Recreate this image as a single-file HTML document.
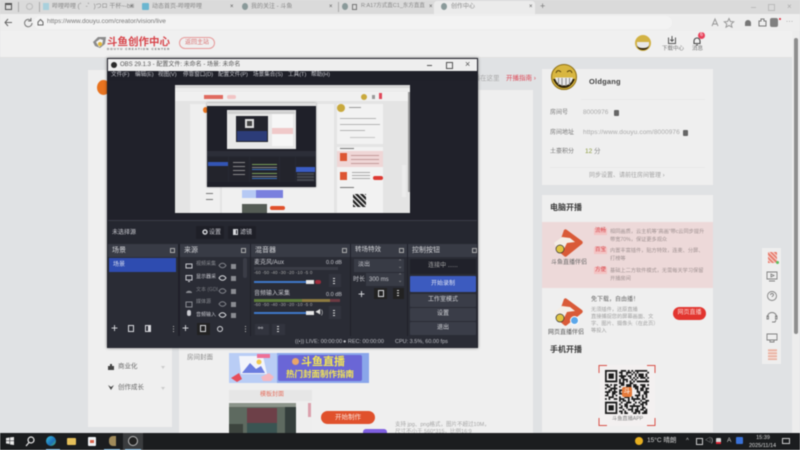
<!DOCTYPE html>
<html lang="zh"><head><meta charset="utf-8"><title>OBS</title>
<style>
html,body{margin:0;padding:0;width:800px;height:450px;overflow:hidden;background:#e0e2e4}
body{position:relative;font-family:"Liberation Sans","Noto Sans CJK SC",sans-serif;font-size:6px;color:#555}
#w{position:absolute;left:0;top:0;width:800px;height:450px;overflow:hidden;filter:blur(.55px)}
#w div,#w svg{position:absolute}
.t{white-space:nowrap;line-height:1}
.d{color:#c9cad0}
.btn{background:#3a3d48;border-radius:1px;color:#d5d6da;text-align:center;font-size:6px;line-height:13px}
.dock{background:#2a2c35}
.hd{left:0;right:0;top:0;height:13px;background:#383b45}
.hd b{position:absolute;left:4px;top:3px;font-weight:400;font-size:7px;color:#d4d5d9;line-height:1;white-space:nowrap}
.ft{color:#e0e1e5;font-size:12px;line-height:1}
.src{font-size:5px}
.card{background:#efefef}
</style></head><body><div id="w">

<!-- browser chrome -->
<div style="left:0;top:0;width:800px;height:14px;background:#dadada"></div>
<div style="left:434px;top:1px;width:101px;height:14px;background:#ebebeb;border-radius:3px 3px 0 0"></div>
<div style="left:5px;top:3px;width:7px;height:7px;border:1px solid #555;border-top-width:2px;box-sizing:border-box"></div>
<div style="left:18px;top:2px;width:1px;height:10px;background:#aaa"></div>
<div style="left:26px;top:3px;width:7px;height:7px;border:1px solid #bbb;border-radius:50%;box-sizing:border-box"></div>
<div style="left:39px;top:2px;width:1px;height:10px;background:#aaa"></div>
<div style="left:43px;top:3px;width:6px;height:7px;background:#a9d0dc"></div>
<div class="t" style="left:52px;top:4px;color:#888;font-size:6px">哔哩哔哩 (゜-゜)つロ 干杯~-bili</div>
<div class="t" style="left:130px;top:4px;color:#555;font-size:6px">×</div>
<div style="left:142px;top:3px;width:7px;height:7px;background:#6bb6d0;border-radius:1px"></div>
<div class="t" style="left:152px;top:4px;color:#888;font-size:6px">动态首页-哔哩哔哩</div>
<div class="t" style="left:230px;top:4px;color:#555;font-size:6px">×</div>
<div style="left:242px;top:3px;width:6px;height:7px;background:#8a9a9a;border-radius:50%"></div>
<div class="t" style="left:251px;top:4px;color:#888;font-size:6px">我的关注 - 斗鱼</div>
<div class="t" style="left:329px;top:4px;color:#555;font-size:6px">×</div>
<div style="left:338px;top:2px;width:1px;height:10px;background:#aaa"></div>
<div style="left:342px;top:3px;width:6px;height:7px;background:#8a9a9a;border-radius:50%"></div>
<div style="left:352px;top:4px;width:5px;height:6px;border:1px solid #777;box-sizing:border-box"></div>
<div class="t" style="left:361px;top:4px;color:#888;font-size:5.5px">R:A17方式直C1_东方直直</div>
<div class="t" style="left:429px;top:4px;color:#555;font-size:6px">×</div>
<div style="left:441px;top:3px;width:6px;height:7px;background:#8a9a9a;border-radius:50%"></div>
<div class="t" style="left:451px;top:4px;color:#888;font-size:6px">创作中心</div>
<div class="t" style="left:529px;top:4px;color:#555;font-size:6px">×</div>
<div class="t" style="left:540px;top:2px;color:#777;font-size:9px">+</div>
<div style="left:751px;top:7px;width:5px;height:1px;background:#bbb"></div>
<div style="left:768px;top:4px;width:5px;height:5px;border:1px solid #bbb"></div>
<div class="t" style="left:787px;top:3px;color:#aaa;font-size:8px">×</div>

<div style="left:0;top:14px;width:800px;height:17px;background:#eeeeee;border-bottom:1px solid #dcdcdc"></div>
<div style="left:34px;top:16px;width:638px;height:13px;background:#f3f3f3;border-radius:7px"></div>
<svg style="left:4px;top:17px" width="30" height="11" viewBox="0 0 30 11" fill="none" stroke="#666" stroke-width="1"><path d="M8 5.5H1M4 2 1 5.5 4 9"/><path d="M27 3.5a3.7 3.7 0 1 0 1 2.5M27 1v3h-3" stroke="#777"/></svg>
<svg style="left:37px;top:18px" width="7" height="8" viewBox="0 0 7 8" fill="none" stroke="#666"><path d="M1 4 3.5 1.500 6 4v3H1z"/></svg>
<div class="t" style="left:47px;top:19px;color:#777;font-size:6.5px">https://www.douyu.com/creator/vision/live</div>
<svg style="left:710px;top:17px" width="60" height="11" viewBox="0 0 60 11" fill="none" stroke="#999"><path d="M2 9 5 2l3 7M3 7h4"/><path d="M19 1.500l1.400 3 3.300.3-2.500 2.200.8 3.200-3-1.700-3 1.700.8-3.200-2.500-2.200 3.300-.3z"/><path d="M38 3a3 3 0 0 1 3 3v3h-6V6a3 3 0 0 1 3-3z" fill="#777" stroke="none"/><path d="M49 4h2V2h3v2h2v5h-7z" stroke="#777"/></svg>
<div style="left:770px;top:18px;width:8px;height:9px;background:#808080;border-radius:2px"></div>
<div style="left:779px;top:18px;width:2px;height:2px;background:#d23;border-radius:50%"></div>
<div class="t" style="left:786px;top:19px;color:#666;font-size:6px;letter-spacing:.5px">···</div>

<!-- site header -->
<div style="left:0;top:31px;width:793px;height:26px;background:#f0f0f0;border-bottom:1px solid #e0e0e0"></div>
<svg style="left:92px;top:36px" width="15" height="13" viewBox="0 0 15 13"><path d="M1 6 6 1l8 0-1 7-5 4-5-2z" fill="#8c8c8c"/><path d="M4 6l4-3 3 1-1 5-3 2z" fill="#f4f4f4"/><circle cx="8" cy="8" r="2" fill="#e2b93a"/></svg>
<div class="t" style="left:107px;top:37px;color:#d8444a;font-size:10.500px;font-weight:700">斗鱼创作中心</div>
<div class="t" style="left:107px;top:48px;color:#666;font-size:3px;letter-spacing:1.100px;font-weight:700">DOUYU CREATION CENTER</div>
<div style="left:179px;top:37px;width:36px;height:12px;box-sizing:border-box;border:1px solid #e79a9a;border-radius:6px;color:#d87070;font-size:6px;line-height:10px;text-align:center">返回主站</div>

<!-- header right -->
<div style="left:635px;top:35px;width:16px;height:16px;border-radius:50%;background:#d2b244"></div>
<div style="left:637px;top:42px;width:12px;height:6px;background:#e8e8e8;border-radius:0 0 5px 5px;border-bottom:2px solid #3a2c10"></div>
<svg style="left:667px;top:35px" width="10" height="10" viewBox="0 0 10 10" fill="none" stroke="#555"><path d="M1.500 2.500v6h7v-6M5 1v5M3.200 4.500 5 6.300l1.800-1.800"/></svg>
<div class="t" style="left:662px;top:47px;color:#777;font-size:5.500px">下载中心</div>
<svg style="left:692px;top:36px" width="10" height="10" viewBox="0 0 10 10" fill="none" stroke="#444" stroke-width="1.100"><path d="M2 7.500V5a3 3 0 0 1 6 0v2.500zM4 9h2"/></svg>
<div style="left:698px;top:32px;width:7px;height:7px;border-radius:50%;background:#e8415a;color:#fff;font-size:5px;line-height:7px;text-align:center">6</div>
<div class="t" style="left:692px;top:47px;color:#777;font-size:5.500px">消息</div>

<!-- scrollbar -->
<div style="left:792px;top:31px;width:8px;height:402px;background:#ededed"></div>
<div style="left:794px;top:38px;width:4px;height:296px;background:#8e8e8e;border-radius:2px"></div>

<!-- left sidebar -->
<div class="card" style="left:88px;top:70px;width:84px;height:357px"></div>
<div style="left:97px;top:80px;width:13px;height:15px;background:#e8731f;border-radius:50%"></div>
<svg style="left:107px;top:363px" width="8" height="30" viewBox="0 0 8 30"><path d="M1 3h6v4H1zM3 1h2v2H3z" fill="#444"/><path d="M1 22l3 2 3-2-3 5z" fill="#444"/></svg>
<div class="t" style="left:118px;top:364px;color:#666;font-size:6.500px">商业化</div>
<div class="t" style="left:118px;top:385px;color:#666;font-size:6.500px">创作成长</div>
<div style="left:161px;top:366px;border:2.500px solid transparent;border-top:3px solid #ccc"></div>
<div style="left:161px;top:387px;border:2.500px solid transparent;border-top:3px solid #ccc"></div>

<!-- main content -->
<div class="card" style="left:179px;top:90px;width:354px;height:343px"></div>
<div class="t" style="left:467px;top:76px;color:#aaa;font-size:6.500px">开播在这里</div>
<div class="t" style="left:506px;top:76px;color:#dd4a58;font-size:6.500px">开播指南 ›</div>
<div class="t" style="left:187px;top:355px;color:#888;font-size:6.500px">房间封面</div>

<div style="left:229px;top:353px;width:140px;height:30px;background:#8aa6ea"></div>
<div style="left:229px;top:353px;width:48px;height:30px;background:#b9cdf5"></div>
<svg style="left:229px;top:353px" width="48" height="30" viewBox="0 0 48 30"><path d="M10 3h24l4 18H12z" fill="#f2f4fb"/><path d="M13 20l8-10 6 6 5-3 4 7z" fill="#6b7ddf"/><circle cx="30" cy="9" r="2.500" fill="#f1c94f"/><path d="M28 1h13v4H28z" fill="#ee6f96"/><path d="M32 24l8-4 5 4-3 4h-8z" fill="#f5b7c0"/><path d="M2 25l8-5 3 6-5 3z" fill="#e64d5b"/></svg>
<div style="left:278px;top:355px;width:84px;height:26px;background:#6a66d6;border-radius:2px"></div>
<div style="left:292px;top:358px;width:7px;height:7px;border-radius:50%;background:#e9a56a"></div>
<div class="t" style="left:301px;top:357px;color:#f3e653;font-size:11px;font-weight:700">斗鱼直播</div>
<div class="t" style="left:286px;top:370px;color:#f3e653;font-size:8.500px;font-weight:700">热门封面制作指南</div>
<div style="left:229px;top:390px;width:83px;height:43px;background:#e6e6e6"></div>
<div class="t" style="left:260px;top:392px;color:#e5705f;font-size:6px">模板封面</div>
<div style="left:229px;top:401px;width:83px;height:32px;background:#eeeeee"></div>
<div style="left:229px;top:403px;width:67px;height:30px;background:#5e6a60"></div>
<div style="left:229px;top:403px;width:67px;height:4px;background:#8b948a"></div>
<div style="left:247px;top:408px;width:30px;height:15px;background:#6d4048"></div>
<div style="left:247px;top:423px;width:30px;height:10px;background:#3a5452"></div>
<div style="left:229px;top:424px;width:14px;height:9px;background:#3d443e"></div>
<div style="left:285px;top:407px;width:11px;height:26px;background:#343e3c"></div>
<div style="left:308px;top:403px;width:3px;height:14px;background:#dba0ac"></div>
<div style="left:321px;top:411px;width:54px;height:13px;border-radius:7px;background:#e0512c;color:#fbe5dc;font-size:6.500px;line-height:13px;text-align:center">开始制作</div>
<div style="left:363px;top:429px;width:24px;height:4px;border-radius:3px 3px 0 0;background:#7e5fe0"></div>
<div class="t" style="left:395px;top:423px;color:#a5a5a5;font-size:5.500px">支持 jpg、png格式，图片不超过10M，</div>
<div class="t" style="left:395px;top:430px;color:#a5a5a5;font-size:5.500px">尺寸不小于 560*315，比例16:9</div>

<!-- right profile card -->
<div class="card" style="left:542px;top:69px;width:171px;height:116px"></div>
<svg style="left:550px;top:64px" width="29" height="29" viewBox="0 0 29 29"><circle cx="14" cy="13" r="12.500" fill="#d8b640" stroke="#8d6f16"/><path d="M3 15c3 7 7 9 11 9s8-2 11-9z" fill="#2c2108"/><path d="M5 13.500h18c-1 6-5 8-9 8s-8-2-9-8z" fill="#e9e9e9"/><path d="M8.500 14v7M12 14v8M16 14v8M19.500 14v7" stroke="#8b8b8b"/><path d="M6 9c1-3 3-3 5-1M17 8c2-2 4-2 5 1" stroke="#5b450c" fill="none"/></svg>
<div class="t" style="left:589px;top:78px;color:#444;font-size:7.500px;font-weight:700;letter-spacing:.2px">Oldgang</div>
<div style="left:581px;top:99px;width:124px;height:1px;background:#e8e8e8"></div>
<div class="t" style="left:550px;top:110px;color:#777;font-size:6px">房间号</div>
<div class="t" style="left:583px;top:110px;color:#aaa;font-size:6.500px">8000976</div>
<div style="left:614px;top:110px;width:5px;height:6px;background:#666;border-radius:1px"></div>
<div class="t" style="left:550px;top:130px;color:#777;font-size:6px">房间地址</div>
<div class="t" style="left:583px;top:130px;color:#aaa;font-size:6.500px;letter-spacing:.1px">https://www.douyu.com/8000976</div>
<div style="left:683px;top:130px;width:5px;height:6px;background:#666;border-radius:1px"></div>
<div class="t" style="left:550px;top:149px;color:#777;font-size:6px">土豪积分</div>
<div class="t" style="left:585px;top:149px;color:#8a9a3a;font-size:6.500px">12 <span style="color:#888">分</span></div>
<div style="left:550px;top:167px;width:155px;height:1px;background:#e8e8e8"></div>
<div class="t" style="left:589px;top:173px;color:#a0a0a0;font-size:6px">同步设置、请前往房间管理 ›</div>

<!-- right live card -->
<div class="card" style="left:542px;top:195px;width:171px;height:237px"></div>
<div class="t" style="left:550px;top:204px;color:#3a3a3a;font-size:8px;font-weight:700">电脑开播</div>
<div style="left:542px;top:222px;width:171px;height:66px;background:#edd9d9"></div>
<svg style="left:553px;top:229px" width="31" height="29" viewBox="0 0 31 29"><path d="M11 1c1-1 2-1 3 0l15 11c1 1 1 2 0 3L14 27c-1 1-2 1-3 0L4 21z" fill="#d95a38"/><path d="M1 14 9 8l8 1 5 4-8 1-3 6-5 3z" fill="#f4ede6"/><circle cx="7" cy="20" r="4" fill="#dfc443" stroke="#333" stroke-width=".7"/></svg>
<div class="t" style="left:551px;top:260px;color:#666;font-size:6px">斗鱼直播伴侣</div>
<div style="left:594px;top:228px;width:13px;height:7px;background:#f3c3c3;color:#d6454a;font-size:5.500px;line-height:7px;text-align:center">流畅</div>
<div style="left:610px;top:229px;color:#a09292;font-size:5.200px;line-height:7.500px;width:96px">相同画质，云主机等“高画”带c云同步提升带宽70%，保证更多观众</div>
<div style="left:594px;top:247px;width:13px;height:7px;background:#f3c3c3;color:#d6454a;font-size:5.500px;line-height:7px;text-align:center">百宝</div>
<div style="left:610px;top:248px;color:#a09292;font-size:5.200px;line-height:7.500px;width:96px">内置丰富插件，贴方特效，连麦、分屏、打榜等</div>
<div style="left:594px;top:267px;width:13px;height:7px;background:#f3c3c3;color:#d6454a;font-size:5.500px;line-height:7px;text-align:center">方便</div>
<div style="left:610px;top:268px;color:#a09292;font-size:5.200px;line-height:7.500px;width:96px">基础上二方软件模式，无需每天学习保留开播房间</div>

<svg style="left:553px;top:298px" width="31" height="29" viewBox="0 0 31 29"><path d="M11 1c1-1 2-1 3 0l15 11c1 1 1 2 0 3L14 27c-1 1-2 1-3 0L4 21z" fill="#d95a38"/><path d="M1 14 9 8l8 1 5 4-8 1-3 6-5 3z" fill="#f4ede6"/><circle cx="7" cy="20" r="4" fill="#dfc443" stroke="#333" stroke-width=".7"/></svg>
<div style="left:570px;top:316px;width:7px;height:7px;border-radius:50%;background:#5ba7ea;border:1px solid #fff;box-sizing:content-box"></div>
<div class="t" style="left:548px;top:330px;color:#555;font-size:6px">网页直播伴侣</div>
<div class="t" style="left:591px;top:297px;color:#666;font-size:6px">免下载，自由播！</div>
<div style="left:591px;top:307px;color:#a0a0a0;font-size:5.200px;line-height:7px;width:72px">无须插件，还原直播<br>直接捕捉您的屏幕画面、文字、图片、摄像头（在此页）等投入</div>
<div style="left:673px;top:307px;width:33px;height:13px;border-radius:7px;background:#e2352f;color:#fbdad6;font-size:6px;line-height:13px;text-align:center">网页直播</div>

<div class="t" style="left:550px;top:346px;color:#3a3a3a;font-size:8px;font-weight:700">手机开播</div>
<div style="left:600px;top:365px;width:55px;height:61px;background:#f3f0f0"></div>
<svg style="left:598px;top:364px" width="58" height="63" viewBox="0 0 58 63" fill="none" stroke="#d9534a" stroke-width="1"><path d="M1 9V1.500h8M49 1.500h8V9M1 54v7.500h8M49 61.500h8V54"/></svg>
<svg style="left:605px;top:370px" width="44" height="44" viewBox="0 0 25 25"><rect width="25" height="25" fill="#f3f0f0"/><path fill="none" stroke="#1c1c1c" d="M0 .5h7m2 0h3m1 0h1m1 0h1m1 0h7M0 1.500h1m5 0h1m1 0h2m2 0h3m1 0h1m1 0h1m5 0h1M0 2.500h1m1 0h3m1 0h1m2 0h1m2 0h1m2 0h1m1 0h1m1 0h3m1 0h1M0 3.500h1m1 0h3m1 0h1m1 0h4m1 0h2m2 0h1m1 0h3m1 0h1M0 4.500h1m1 0h3m1 0h1m2 0h2m3 0h1m1 0h1m1 0h1m1 0h3m1 0h1M0 5.500h1m5 0h1m1 0h1m1 0h3m2 0h1m1 0h1m5 0h1M0 6.500h7m1 0h1m1 0h1m1 0h1m1 0h1m1 0h1m1 0h7M8 7.500h3m3 0h2M0 8.500h2m1 0h1m1 0h2m2 0h2m1 0h3m1 0h2m2 0h3m1 0h1M1 9.500h2m2 0h1m2 0h1m3 0h3m1 0h3m2 0h2M0 10.500h1m2 0h4m3 0h1m6 0h2m1 0h2m1 0h2M2 11.500h2m1 0h1m2 0h2m8 0h1m1 0h2m1 0h1M0 12.500h3m1 0h3m1 0h1m9 0h2m2 0h3M1 13.500h1m2 0h2m2 0h3m8 0h1m2 0h2M0 14.500h2m2 0h1m1 0h1m3 0h1m6 0h3m1 0h1m1 0h1M2 15.500h3m3 0h1m2 0h3m1 0h1m2 0h1m2 0h1m1 0h1M0 16.500h1m1 0h1m2 0h2m1 0h3m2 0h1m1 0h5m1 0h2M8 17.500h1m1 0h2m1 0h1m2 0h1m3 0h1m2 0h2M0 18.500h7m2 0h1m2 0h3m2 0h1m1 0h1m1 0h3M0 19.500h1m5 0h1m1 0h1m2 0h2m3 0h1m3 0h2m1 0h1M0 20.500h1m1 0h3m1 0h1m2 0h1m1 0h2m1 0h6m1 0h1M0 21.500h1m1 0h3m1 0h1m1 0h2m2 0h1m2 0h1m2 0h1m2 0h2M0 22.500h1m1 0h3m1 0h1m3 0h1m2 0h3m1 0h2m1 0h2m1 0h1M0 23.500h1m5 0h1m1 0h2m1 0h1m3 0h1m1 0h3m2 0h2M0 24.500h7m2 0h1m1 0h2m3 0h2m1 0h1m1 0h3"/></svg>
<div style="left:622px;top:387px;width:10px;height:10px;background:#e57a3a;border-radius:2px;color:#fff;font-size:7px;line-height:10px;text-align:center">斗</div>
<div class="t" style="left:612px;top:417px;color:#808080;font-size:5.200px">斗鱼直播APP</div>

<!-- floating right tool -->
<div style="left:762px;top:248px;width:19px;height:116px;background:#eeeeee"></div>
<div style="left:768px;top:252px;width:9px;height:11px;background:repeating-linear-gradient(45deg,#e87a6a 0 1.500px,#f3c6c0 1.500px 3px)"></div>
<div style="left:776px;top:261px;width:3px;height:3px;background:#5fbf5f;border-radius:50%"></div>
<svg style="left:765px;top:270px" width="14" height="88" viewBox="0 0 14 88" fill="none" stroke="#808080" stroke-width=".9"><path d="M2 2h10v7H2zM4 11h6M6 4l3 1.500L6 7z"/><circle cx="7" cy="26" r="4.500"/><path d="M5.500 25c0-2 3-2 3 0 0 1-1.500 1-1.500 2"/><path d="M2.500 47c0-6 9-6 9 0M2 46h1.500v3H2zM10.500 46H12v3h-1.500zM7 52h3l1-2"/><path d="M2 64h10v6H2zM5 70h4v2H5z"/></svg>
<div style="left:768px;top:349px;width:9px;height:11px;background:repeating-linear-gradient(0deg,#e9b0a0 0 1.500px,#f3dcd5 1.500px 3px)"></div>

<!-- OBS window -->
<div style="left:107px;top:58px;width:371px;height:290px;background:#1f2029;box-shadow:0 0 3px rgba(0,0,0,.45)"></div>
<div style="left:108px;top:59px;width:369px;height:12px;background:#eeeeee"></div>
<div style="left:111px;top:62px;width:6px;height:6px;background:#2b2b2b;border-radius:50%"></div>
<div class="t" style="left:120px;top:62px;color:#555;font-size:6px">OBS 29.1.3 - 配置文件: 未命名 - 场景: 未命名</div>
<div style="left:427px;top:65px;width:5px;height:1px;background:#555"></div>
<div style="left:446px;top:62px;width:5px;height:5px;border:1px solid #555"></div>
<div class="t" style="left:465px;top:60px;color:#555;font-size:9px">×</div>
<div class="t d" style="left:111px;top:73px;font-size:5.600px">文件(F)</div>
<div class="t d" style="left:135px;top:73px;font-size:5.600px">编辑(E)</div>
<div class="t d" style="left:158px;top:73px;font-size:5.600px">视图(V)</div>
<div class="t d" style="left:183px;top:73px;font-size:5.600px">停靠窗口(D)</div>
<div class="t d" style="left:218px;top:73px;font-size:5.600px">配置文件(P)</div>
<div class="t d" style="left:253px;top:73px;font-size:5.600px">场景集合(S)</div>
<div class="t d" style="left:288px;top:73px;font-size:5.600px">工具(T)</div>
<div class="t d" style="left:311px;top:73px;font-size:5.600px">帮助(H)</div>
<div style="left:108px;top:81px;width:369px;height:139px;background:#20212a"></div>

<!-- OBS preview: captured page -->
<div style="left:175px;top:85px;width:235px;height:128px;background:#e4e4e4"></div>
<div style="left:175px;top:85px;width:235px;height:3px;background:#d8d8d8"></div>
<div style="left:175px;top:88px;width:235px;height:4px;background:#ececec"></div>
<div style="left:175px;top:92px;width:235px;height:9px;background:#f0f0f0"></div>
<div style="left:204px;top:95px;width:19px;height:4px;background:#e06a5f"></div>
<div style="left:227px;top:95px;width:9px;height:4px;background:#f1c4c4;border-radius:2px"></div>
<div style="left:361px;top:94px;width:6px;height:6px;background:#c9a93d;border-radius:50%"></div>
<div style="left:372px;top:95px;width:3px;height:4px;background:#999"></div>
<div style="left:379px;top:93px;width:3px;height:6px;background:#e0485a"></div>
<div style="left:190px;top:104px;width:30px;height:109px;background:#efefef"></div>
<div style="left:203px;top:107px;width:5px;height:6px;background:#e8731f;border-radius:50%"></div>
<div style="left:222px;top:104px;width:112px;height:109px;background:#f0f0f0"></div>
<div style="left:337px;top:104px;width:46px;height:40px;background:#f2f2f2"></div>
<div style="left:337px;top:147px;width:46px;height:66px;background:#f2f2f2"></div>
<div style="left:337px;top:104px;width:8px;height:8px;background:#c9a93d;border-radius:50%"></div>
<div style="left:349px;top:107px;width:12px;height:1px;background:#999"></div>
<div style="left:340px;top:118px;width:36px;height:1px;background:#b5b5b5"></div>
<div style="left:340px;top:124px;width:40px;height:1px;background:#b5b5b5"></div>
<div style="left:340px;top:130px;width:25px;height:1px;background:#b5b5b5"></div>
<div style="left:350px;top:137px;width:25px;height:1px;background:#c5c5c5"></div>
<div style="left:340px;top:148px;width:14px;height:1px;background:#777"></div>
<div style="left:337px;top:151px;width:46px;height:16px;background:#efd6d6"></div>
<div style="left:340px;top:153px;width:7px;height:8px;background:#dd5533"></div>
<div style="left:351px;top:155px;width:28px;height:1px;background:#c59b9b;box-shadow:0 4px 0 #c59b9b,0 8px 0 #c59b9b"></div>
<div style="left:340px;top:172px;width:7px;height:8px;background:#dd5533"></div>
<div style="left:352px;top:172px;width:18px;height:1px;background:#aaa;box-shadow:0 3px 0 #aaa,0 6px 0 #aaa"></div>
<div style="left:373px;top:176px;width:10px;height:4px;background:#dd3a33;border-radius:2px"></div>
<div style="left:340px;top:187px;width:14px;height:1px;background:#777"></div>
<div style="left:353px;top:194px;width:13px;height:13px;background:repeating-linear-gradient(45deg,#222 0 2px,#ddd 2px 3.500px)"></div>
<div style="left:402px;top:165px;width:4px;height:32px;background:#ececec"></div>
<div style="left:408px;top:92px;width:2px;height:100px;background:#999"></div>
<div style="left:242px;top:190px;width:41px;height:8px;background:#7a80de"></div>
<div style="left:242px;top:190px;width:14px;height:8px;background:#b6c9f4"></div>
<div style="left:242px;top:204px;width:25px;height:9px;background:#555c55"></div>
<div style="left:270px;top:206px;width:15px;height:4px;background:#e0512c;border-radius:2px"></div>
<div style="left:206px;top:193px;width:7px;height:1px;background:#777;box-shadow:0 6px 0 #777"></div>

<!-- nested OBS in preview -->
<div style="left:207px;top:103px;width:109px;height:84px;background:#272933;box-shadow:0 0 2px rgba(0,0,0,.4)"></div>
<div style="left:207px;top:103px;width:109px;height:3px;background:#e0e0e0"></div>
<div style="left:207px;top:106px;width:109px;height:4px;background:#1f2029"></div>
<div style="left:207px;top:110px;width:109px;height:41px;background:#1f2029"></div>
<div style="left:227px;top:110px;width:69px;height:39px;background:#e8e8e8"></div>
<div style="left:228px;top:111px;width:67px;height:3px;background:#d0d0d0"></div>
<div style="left:236px;top:116px;width:32px;height:26px;background:#23242c"></div>
<div style="left:245px;top:119px;width:9px;height:9px;background:#dedede"></div>
<div style="left:247px;top:121px;width:5px;height:5px;background:#444"></div>
<div style="left:237px;top:131px;width:30px;height:10px;background:#2c3c78"></div>
<div style="left:272px;top:114px;width:21px;height:32px;background:#f6f6f6"></div>
<div style="left:272px;top:128px;width:21px;height:6px;background:#f0c9c9"></div>
<div style="left:207px;top:151px;width:109px;height:5px;background:#2c2e38"></div>
<div style="left:208px;top:157px;width:20px;height:25px;background:#23242c"></div>
<div style="left:208px;top:162px;width:20px;height:4px;background:#3355b5"></div>
<div style="left:229px;top:157px;width:20px;height:25px;background:#23242c"></div>
<div style="left:233px;top:162px;width:12px;height:1px;background:#888;box-shadow:0 4px 0 #888,0 8px 0 #888,0 12px 0 #888"></div>
<div style="left:250px;top:157px;width:29px;height:25px;background:#23242c"></div>
<div style="left:252px;top:164px;width:25px;height:1px;background:#7a9f5a;box-shadow:0 3px 0 #888,0 5px 0 #3a72c0,0 9px 0 #7a9f5a,0 12px 0 #888,0 14px 0 #3a72c0"></div>
<div style="left:280px;top:157px;width:15px;height:25px;background:#23242c"></div>
<div style="left:296px;top:157px;width:19px;height:25px;background:#23242c"></div>
<div style="left:296px;top:167px;width:19px;height:5px;background:#3a5cc4"></div>
<div style="left:297px;top:173px;width:17px;height:2px;background:#444750;box-shadow:0 3px 0 #444750,0 6px 0 #444750"></div>
<div style="left:207px;top:182px;width:109px;height:5px;background:#1f2029"></div>

<!-- OBS toolbar -->
<div style="left:108px;top:220px;width:369px;height:24px;background:#252730;border-top:1px solid #3a3c46;box-sizing:border-box"></div>
<div class="t d" style="left:112px;top:230px;font-size:6px">未选择源</div>
<div style="left:196px;top:226px;width:28px;height:13px;background:#1e1f27;border-radius:1px"></div>
<div style="left:228px;top:226px;width:28px;height:13px;background:#1e1f27;border-radius:1px"></div>
<svg style="left:202px;top:229px" width="6" height="6" viewBox="0 0 6 6"><circle cx="3" cy="3" r="2" fill="none" stroke="#d8d9dd" stroke-width="1.400"/></svg>
<div class="t d" style="left:209px;top:230px;font-size:6px">设置</div>
<div style="left:233px;top:229px;width:5px;height:6px;border:1px solid #d8d9dd;box-sizing:border-box;border-left-width:3px"></div>
<div class="t d" style="left:240px;top:230px;font-size:6px">滤镜</div>

<!-- Scenes dock -->
<div class="dock" style="left:108px;top:244px;width:70px;height:92px"><div class="hd"><b>场景</b></div></div>
<div style="left:109px;top:258px;width:67px;height:14px;background:#2e4cb0"></div>
<div class="t" style="left:113px;top:262px;color:#d8def0;font-size:6px">场景</div>
<div style="left:170px;top:248px;width:3px;height:3px;border:1px solid #aaa"></div>
<div class="ft" style="left:111px;top:322px">+</div>
<div style="left:128px;top:325px;width:6px;height:7px;border:1px solid #d8d9dd;box-sizing:border-box"></div>
<div style="left:145px;top:325px;width:6px;height:7px;border:1px solid #d8d9dd;box-sizing:border-box;border-right-width:3px"></div>
<div style="left:173px;top:326px;width:1px;height:1px;background:#bbb;box-shadow:0 2.500px 0 #bbb,0 5px 0 #bbb"></div>

<!-- Sources dock -->
<div class="dock" style="left:180px;top:244px;width:70px;height:92px"><div class="hd"><b>来源</b></div></div>
<div style="left:241px;top:248px;width:3px;height:3px;border:1px solid #aaa"></div>
<svg style="left:185px;top:261px" width="8" height="58" viewBox="0 0 8 58" fill="none" stroke="#c9cad0"><path d="M1 3h6v4H1z"/><path d="M1 14.500h6v4.500H1zM3 20.500h2"/><path d="M1 32c0-3 6-3 6 0z" fill="#8a8c92" stroke="none"/><path d="M1 41h6v5H1z" stroke="#8a8c92"/><path d="M4 52v3M2.500 53a1.500 1.500 0 0 0 3 0v-2a1.500 1.500 0 0 0-3 0z" fill="#c9cad0"/></svg>
<div class="t src" style="left:196px;top:262px;color:#8a8c92">视频采集</div>
<div class="t d src" style="left:196px;top:275px">显示器采</div>
<div class="t src" style="left:196px;top:288px;color:#7a7c82">文本 (GDI</div>
<div class="t src" style="left:196px;top:300px;color:#8a8c92">媒体源</div>
<div class="t d src" style="left:196px;top:313px">音频输入</div>
<svg style="left:218px;top:261px" width="22" height="58" viewBox="0 0 22 58" fill="none" stroke="#bbbcc2"><g stroke="#7f8188"><path d="M1 4.500c2-3 5-3 7 0-2 3-5 3-7 0z"/><path d="M1 30c2-3 5-3 7 0-2 3-5 3-7 0zM1 43c2-3 5-3 7 0-2 3-5 3-7 0z"/></g><path d="M1 17c2-3 5-3 7 0-2 3-5 3-7 0zM1 54c2-3 5-3 7 0-2 3-5 3-7 0z" stroke="#d8d9dd"/><g fill="#8a8c92" stroke="none"><path d="M13 3h5v5h-5zM13 15h5v5h-5zM13 28h5v5h-5zM13 41h5v5h-5zM13 52h5v5h-5z"/></g></svg>
<div style="left:243px;top:258px;width:4px;height:20px;background:#3a3c46;border-radius:2px"></div>
<div class="ft" style="left:182px;top:322px">+</div>
<div style="left:197px;top:323px;width:13px;height:12px;background:#222"></div>
<div style="left:200px;top:325px;width:6px;height:7px;border:1px solid #d8d9dd;box-sizing:border-box"></div>
<div style="left:217px;top:326px;width:6px;height:6px;border-radius:50%;border:1.500px solid #d8d9dd;box-sizing:border-box"></div>
<div style="left:245px;top:326px;width:1px;height:1px;background:#bbb;box-shadow:0 2.500px 0 #bbb,0 5px 0 #bbb"></div>

<!-- Mixer dock -->
<div class="dock" style="left:251px;top:244px;width:99px;height:92px"><div class="hd"><b>混音器</b></div></div>
<div style="left:342px;top:248px;width:3px;height:3px;border:1px solid #aaa"></div>
<div class="t d" style="left:254px;top:260px;font-size:6px">麦克风/Aux</div>
<div class="t d" style="left:326px;top:261px;font-size:5.500px">0.0 dB</div>
<div style="left:254px;top:267px;width:84px;height:3px;background:#3a3c46"></div>
<div class="t" style="left:254px;top:271px;color:#aaa;font-size:4.500px;letter-spacing:.15px">-60 -50 -40 -30 -20 -10 -5 0</div>
<div style="left:254px;top:281px;width:52px;height:2px;background:#3e78c8"></div>
<div style="left:306px;top:280px;width:8px;height:4px;background:#e8e8e8"></div>
<div style="left:315px;top:280px;width:6px;height:4px;background:#9c2b3a;border-radius:2px"></div>
<div style="left:329px;top:274px;width:12px;height:13px;background:#32343e"></div>
<div style="left:333px;top:278px;width:2px;height:1px;background:#ddd;box-shadow:0 2.500px 0 #ddd,0 5px 0 #ddd"></div>
<div class="t d" style="left:254px;top:291px;font-size:6px">音频输入采集</div>
<div class="t d" style="left:326px;top:293px;font-size:5.500px">0.0 dB</div>
<div style="left:254px;top:299px;width:48px;height:3px;background:#5d7a3a"></div>
<div style="left:302px;top:299px;width:28px;height:3px;background:#8d7a3f"></div>
<div style="left:330px;top:299px;width:10px;height:3px;background:#6d3a42"></div>
<div class="t" style="left:254px;top:303px;color:#aaa;font-size:4.500px;letter-spacing:.15px">-60 -50 -40 -30 -20 -10 -5 0</div>
<div style="left:254px;top:312px;width:52px;height:2px;background:#3e78c8"></div>
<div style="left:306px;top:311px;width:8px;height:4px;background:#e8e8e8"></div>
<div class="t" style="left:315px;top:310px;color:#ddd;font-size:6px">◀)</div>
<div style="left:329px;top:306px;width:12px;height:13px;background:#32343e"></div>
<div style="left:333px;top:310px;width:2px;height:1px;background:#ddd;box-shadow:0 2.500px 0 #ddd,0 5px 0 #ddd"></div>
<div style="left:255px;top:324px;width:14px;height:11px;background:#32343e"></div>
<div class="t" style="left:258px;top:326px;color:#d8d9dd;font-size:6px">⚯</div>
<div style="left:272px;top:324px;width:13px;height:11px;background:#32343e"></div>
<div style="left:277px;top:326px;width:2px;height:1px;background:#ddd;box-shadow:0 2.500px 0 #ddd,0 5px 0 #ddd"></div>

<!-- Transitions dock -->
<div class="dock" style="left:351px;top:244px;width:56px;height:92px"><div class="hd"><b style="font-size:6.500px">转场特效</b></div></div>
<div style="left:399px;top:248px;width:3px;height:3px;border:1px solid #aaa"></div>
<div style="left:354px;top:259px;width:50px;height:13px;background:#383b45"></div>
<div class="t d" style="left:358px;top:262px;font-size:6px">淡出</div>
<div class="t" style="left:398px;top:260px;color:#aaa;font-size:5px;line-height:5px">⌃<br>⌄</div>
<div class="t d" style="left:353px;top:277px;font-size:6px">时长</div>
<div style="left:366px;top:273px;width:38px;height:13px;background:#383b45"></div>
<div class="t d" style="left:369px;top:277px;font-size:6px">300 ms</div>
<div class="t" style="left:398px;top:274px;color:#aaa;font-size:5px;line-height:5px">⌃<br>⌄</div>
<div class="ft" style="left:358px;top:288px">+</div>
<div style="left:374px;top:288px;width:13px;height:11px;background:#222"></div>
<div style="left:378px;top:290px;width:6px;height:7px;border:1px solid #d8d9dd;box-sizing:border-box"></div>
<div style="left:393px;top:288px;width:11px;height:11px;background:#222"></div>
<div style="left:397px;top:290px;width:2px;height:1px;background:#ddd;box-shadow:0 2.500px 0 #ddd,0 5px 0 #ddd"></div>

<!-- Controls dock -->
<div class="dock" style="left:408px;top:244px;width:69px;height:92px"><div class="hd"><b>控制按钮</b></div></div>
<div style="left:472px;top:248px;width:3px;height:3px;border:1px solid #aaa"></div>
<div class="btn" style="left:410px;top:259px;width:66px;height:15px;background:#20212a;color:#aaa;line-height:15px">连接中 ......</div>
<div class="btn" style="left:410px;top:276px;width:66px;height:16px;background:#3c5bbf;color:#dfe4f5;line-height:16px">开始录制</div>
<div class="btn" style="left:410px;top:294px;width:66px;height:13px">工作室模式</div>
<div class="btn" style="left:410px;top:308px;width:66px;height:13px">设置</div>
<div class="btn" style="left:410px;top:322px;width:66px;height:13px">退出</div>

<!-- Status -->
<div style="left:108px;top:336px;width:369px;height:12px;background:#2a2c35"></div>
<div class="t" style="left:295px;top:340px;color:#bfc0c6;font-size:5.500px">((•)) LIVE: 00:00:00</div>
<div class="t" style="left:343px;top:340px;color:#bfc0c6;font-size:5.500px">● REC: 00:00:00</div>
<div class="t" style="left:395px;top:340px;color:#bfc0c6;font-size:5.500px">CPU: 3.5%, 60.00 fps</div>

<!-- Taskbar -->
<div style="left:0;top:433px;width:800px;height:17px;background:#1b1d1f"></div>
<div style="left:123px;top:433px;width:20px;height:17px;background:#3a3c3e"></div>
<svg style="left:6px;top:437px" width="8" height="8" viewBox="0 0 8 8" fill="#e8e8e8"><path d="M0 1l3.500-.5v3H0zM4 .4 8 0v3.500H4zM0 4h3.500v3L0 6.500zM4 4h4v4L4 7.500z"/></svg>
<svg style="left:25px;top:436px" width="10" height="11" viewBox="0 0 10 11" fill="none" stroke="#e8e8e8" stroke-width="1.200"><circle cx="6" cy="4" r="3"/><path d="M4 6.500 1 10"/></svg>
<div style="left:46px;top:436px;width:10px;height:10px;border-radius:50%;background:linear-gradient(135deg,#3ac0d8,#1d6fb8 60%,#4bc07a)"></div>
<div style="left:67px;top:438px;width:9px;height:7px;background:#e6c05a;border-radius:1px"></div>
<div style="left:88px;top:437px;width:8px;height:9px;background:#eef1f3;border-radius:1px"></div>
<div style="left:90px;top:440px;width:4px;height:3px;background:#d9634a"></div>
<div style="left:109px;top:436px;width:7px;height:10px;background:#a08a5a;border-radius:4px 0 0 4px"></div>
<div style="left:128px;top:436px;width:10px;height:10px;border-radius:50%;background:#222;border:1px solid #bbb;box-sizing:border-box"></div>
<div style="left:46px;top:449px;width:14px;height:1px;background:#7fb8e0"></div>
<div style="left:104px;top:449px;width:16px;height:1px;background:#7fb8e0"></div>
<div style="left:125px;top:449px;width:16px;height:1px;background:#7fb8e0"></div>
<div style="left:635px;top:437px;width:8px;height:8px;border-radius:50%;background:#e8b020"></div>
<div class="t" style="left:647px;top:438px;color:#d5d5d5;font-size:6.500px">15°C 晴朗</div>
<div class="t" style="left:686px;top:438px;color:#ccc;font-size:6px">^</div>
<div style="left:696px;top:438px;width:5px;height:5px;border:1px solid #ccc"></div>
<div class="t" style="left:705px;top:438px;color:#ccc;font-size:6px">◁)</div>
<div style="left:716px;top:438px;width:5px;height:6px;background:#d8d8d8;border-radius:1px 1px 0 0"></div>
<div style="left:716px;top:442px;width:5px;height:2px;background:#d23"></div>
<div class="t" style="left:727px;top:438px;color:#ccc;font-size:6.500px">A</div>
<div style="left:736px;top:437px;width:7px;height:7px;background:#3a72d8;border-radius:1px"></div>
<div class="t" style="left:756px;top:436px;color:#ddd;font-size:5.500px;text-align:center;width:14px">15:39</div>
<div class="t" style="left:749px;top:444px;color:#ddd;font-size:5.500px">2025/11/14</div>
<div style="left:782px;top:438px;width:8px;height:6px;border:1px solid #ccc;box-sizing:border-box"></div>

</div></body></html>
